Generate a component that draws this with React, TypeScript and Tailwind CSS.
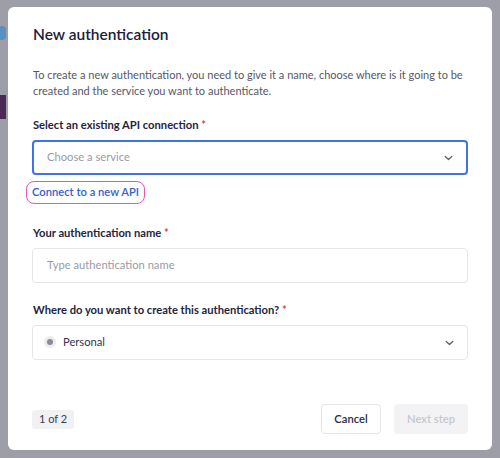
import React from "react";

function Chevron() {
  return (
    <svg width="9" height="6" viewBox="0 0 9 6" fill="none">
      <path d="M1.2 1.5l3.3 3 3.3-3" stroke="#5d5f72" strokeWidth="1.3" strokeLinecap="round" strokeLinejoin="round" />
    </svg>
  );
}

export default function App() {
  return (
    <div className="w-[500px] h-[458px] bg-[#9e9ea8] pt-[7px] pl-[8px] relative overflow-hidden" style={{ fontFamily: "Lato, 'Noto Sans', sans-serif" }}>
      <div className="absolute left-0 top-[26px] w-[6px] h-[14px] bg-[#5a8fc0] rounded-r-sm" />
      <div className="absolute left-0 top-[95px] w-[6px] h-[24px] bg-[#4a2a55]" />
      <div className="relative w-[484px] h-[443px] bg-white rounded-[6px] px-6 pt-[16px] flex flex-col">
        <h1 className="text-[15.5px] leading-[22px] font-semibold text-[#1c1d3a] pl-[1px]">New authentication</h1>
        <p className="mt-[22px] text-[11px] leading-[16px] text-[#555766] pl-[1px]">
          To create a new authentication, you need to give it a name, choose where is it going to be created and the service you want to authenticate.
        </p>
        <div className="mt-[18px] text-[11.2px] leading-[16px] font-bold text-[#24253d] pl-[1px]">
          Select an existing API connection <span className="text-[#e0443e]">*</span>
        </div>
        <div className="mt-[7px] h-[35px] rounded-[4px] border-2 border-[#3f72e6] flex items-center justify-between pl-[13px] pr-[13px]">
          <span className="text-[11.2px] text-[#9a9ba6]">Choose a service</span>
          <Chevron />
        </div>
        <div className="mt-[6px] self-start -ml-[6px] h-[23px] px-[5px] rounded-[8px] border-[1.5px] border-[#e456b7] flex items-center">
          <span className="text-[11.2px] font-semibold text-[#2f5fd0]">Connect to a new API</span>
        </div>
        <div className="mt-[21px] text-[11.2px] leading-[16px] font-bold text-[#24253d] pl-[1px]">
          Your authentication name <span className="text-[#e0443e]">*</span>
        </div>
        <div className="mt-[7px] h-[35px] rounded-[4px] border border-[#e6e6ea] flex items-center pl-[14px]">
          <span className="text-[11.2px] text-[#9a9ba6]">Type authentication name</span>
        </div>
        <div className="mt-[19px] text-[11.2px] leading-[16px] font-bold text-[#24253d] pl-[1px]">
          Where do you want to create this authentication? <span className="text-[#e0443e]">*</span>
        </div>
        <div className="mt-[7px] h-[35px] rounded-[4px] border border-[#e6e6ea] flex items-center justify-between pl-[11px] pr-[13px]">
          <div className="flex items-center gap-[7px]">
            <div className="w-[12px] h-[12px] rounded-full bg-[#ececf0] flex items-center justify-center">
              <div className="w-[6px] h-[6px] rounded-full bg-[#8a8b96]" />
            </div>
            <span className="text-[11.2px] text-[#33344c]">Personal</span>
          </div>
          <Chevron />
        </div>
        <div className="mt-auto mb-[16px] flex items-center justify-between">
          <div className="h-[19px] px-[7px] rounded-[3px] bg-[#f1f1f3] flex items-center text-[11px] text-[#3c3d50]">1 of 2</div>
          <div className="flex items-center gap-[13px]">
            <div className="h-[30px] w-[60px] rounded-[4px] border border-[#e6e6ea] flex items-center justify-center text-[11.2px] font-semibold text-[#2a2b42]">Cancel</div>
            <div className="h-[30px] w-[74px] rounded-[4px] bg-[#f3f3f5] flex items-center justify-center text-[11.2px] font-semibold text-[#c6c7ce]">Next step</div>
          </div>
        </div>
      </div>
    </div>
  );
}
